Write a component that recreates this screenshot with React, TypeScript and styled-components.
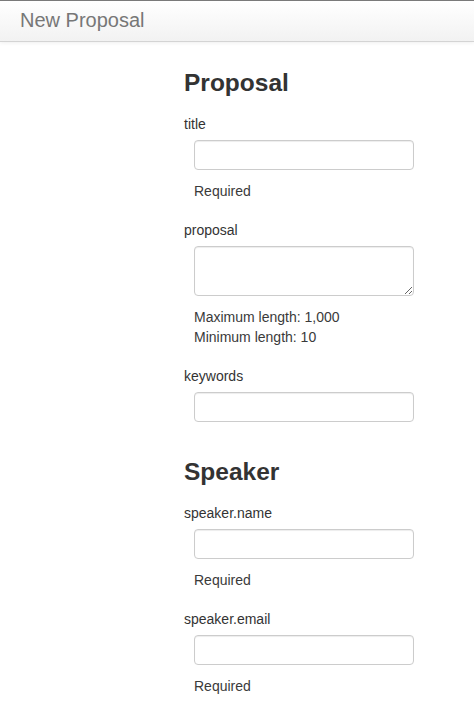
import React from 'react'
import styled, { createGlobalStyle } from 'styled-components'

const GlobalStyle = createGlobalStyle`
  html, body {
    margin: 0;
    padding: 0;
    background: #fff;
  }
  body {
    font-family: "Liberation Sans", Arial, Helvetica, sans-serif;
    font-size: 14px;
    line-height: 20px;
    color: #333;
  }
  * {
    box-sizing: border-box;
  }
`

const Navbar = styled.div`
  height: 42px;
  border-top: 1px solid #7a7a7a;
  border-bottom: 1px solid #d4d4d4;
  background-image: linear-gradient(to bottom, #ffffff, #f2f2f2);
  box-shadow: 0 1px 4px rgba(0, 0, 0, 0.065);
  display: flex;
  align-items: flex-start;
`

const Brand = styled.a`
  display: block;
  padding: 9px 20px 10px;
  font-size: 20px;
  line-height: 20px;
  font-weight: 200;
  color: #777;
  text-decoration: none;
`

const Main = styled.main`
  padding: 21px 0 10px 184px;
`

const Fieldset = styled.fieldset`
  border: 0;
  margin: 0;
  padding: 0;
  min-width: 0;

  & + & {
    margin-top: 11px;
  }
`

const Legend = styled.h3`
  margin: 0;
  padding: 0;
  font-size: 24.5px;
  line-height: 40px;
  font-weight: bold;
  color: #333;
`

const Group = styled.div`
  margin-top: 11px;
  margin-bottom: 19px;

  & + & {
    margin-top: 0;
  }
`

const Label = styled.label`
  display: block;
  margin-bottom: 6px;
  font-size: 14px;
  line-height: 20px;
  color: #333;
`

const Controls = styled.div`
  padding-left: 10px;
`

const TextInput = styled.input`
  display: block;
  width: 220px;
  height: 30px;
  margin: 0;
  padding: 4px 6px;
  font: inherit;
  color: #555;
  background: #fff;
  border: 1px solid #ccc;
  border-radius: 4px;
  box-shadow: inset 0 1px 1px rgba(0, 0, 0, 0.075);
  outline: none;
`

const TextArea = styled.textarea`
  display: block;
  width: 220px;
  height: 50px;
  margin: 0;
  padding: 4px 6px;
  font: inherit;
  color: #555;
  background: #fff;
  border: 1px solid #ccc;
  border-radius: 4px;
  box-shadow: inset 0 1px 1px rgba(0, 0, 0, 0.075);
  outline: none;
  resize: vertical;
`

const Help = styled.div`
  margin-top: 11px;
  font-size: 14px;
  line-height: 20px;
  color: #3a3a3a;
`

type FieldProps = {
  id: string
  label: string
  multiline?: boolean
  help?: string[]
}

const Field = ({ id, label, multiline, help = [] }: FieldProps) => (
  <Group>
    <Label htmlFor={id}>{label}</Label>
    <Controls>
      {multiline ? <TextArea id={id} /> : <TextInput id={id} type="text" />}
      {help.length > 0 && (
        <Help>
          {help.map((line) => (
            <div key={line}>{line}</div>
          ))}
        </Help>
      )}
    </Controls>
  </Group>
)

export default function App() {
  return (
    <>
      <GlobalStyle />
      <Navbar>
        <Brand href="#">New Proposal</Brand>
      </Navbar>
      <Main>
        <Fieldset>
          <Legend>Proposal</Legend>
          <Field id="title" label="title" help={['Required']} />
          <Field
            id="proposal"
            label="proposal"
            multiline
            help={['Maximum length: 1,000', 'Minimum length: 10']}
          />
          <Field id="keywords" label="keywords" />
        </Fieldset>
        <Fieldset>
          <Legend>Speaker</Legend>
          <Field id="speaker_name" label="speaker.name" help={['Required']} />
          <Field id="speaker_email" label="speaker.email" help={['Required']} />
        </Fieldset>
      </Main>
    </>
  )
}
